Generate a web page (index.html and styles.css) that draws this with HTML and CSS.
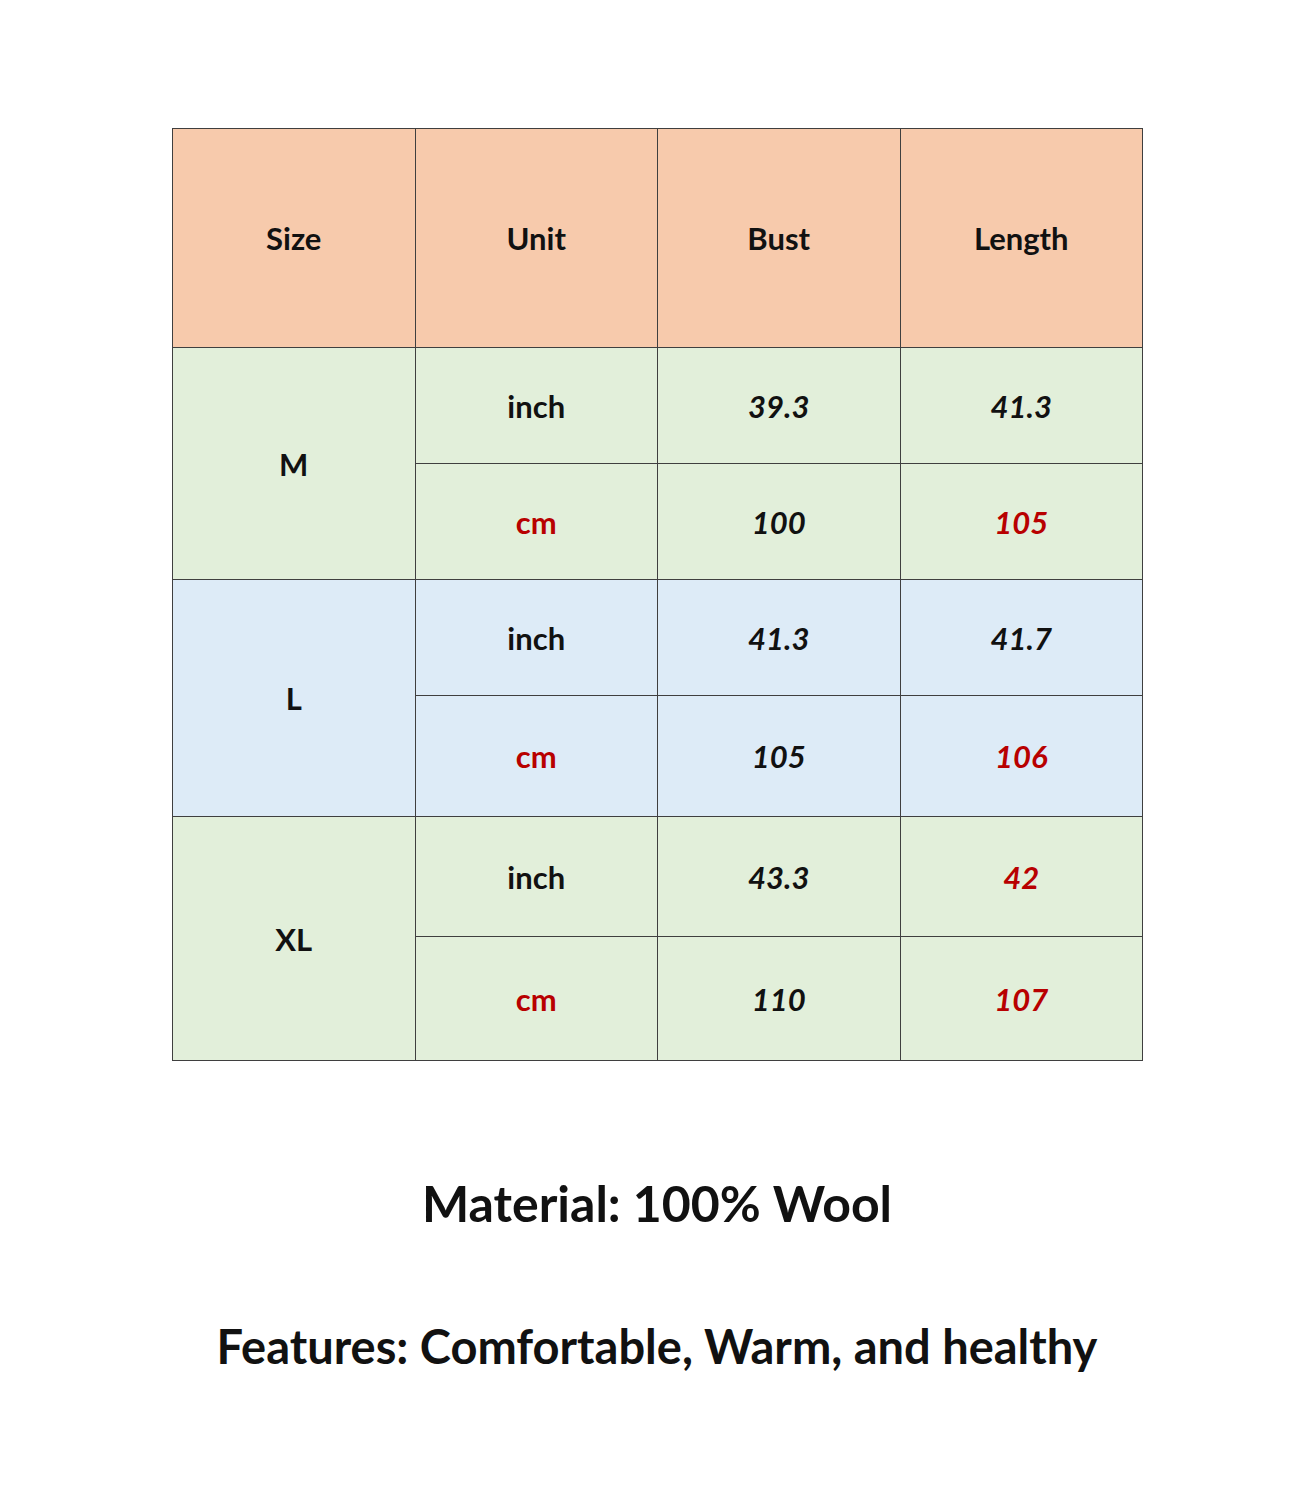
FILE: index.html
```html
<!DOCTYPE html>
<html>
<head>
<meta charset="utf-8">
<link rel="stylesheet" href="styles.css">
</head>
<body>
<div class="page">
  <table class="size-table">
    <colgroup><col class="c1"><col class="c2"><col class="c3"><col class="c4"></colgroup>
    <tr class="head"><th>Size</th><th>Unit</th><th>Bust</th><th>Length</th></tr>
    <tr class="green r1"><td rowspan="2" class="size">M</td><td>inch</td><td class="num">39.3</td><td class="num">41.3</td></tr>
    <tr class="green r2"><td class="red">cm</td><td class="num">100</td><td class="num red">105</td></tr>
    <tr class="blue r3"><td rowspan="2" class="size">L</td><td>inch</td><td class="num">41.3</td><td class="num">41.7</td></tr>
    <tr class="blue r4"><td class="red">cm</td><td class="num">105</td><td class="num red">106</td></tr>
    <tr class="green r5"><td rowspan="2" class="size">XL</td><td>inch</td><td class="num">43.3</td><td class="num red">42</td></tr>
    <tr class="green r6"><td class="red">cm</td><td class="num">110</td><td class="num red">107</td></tr>
  </table>
  <p class="material">Material: 100% Wool</p>
  <p class="features">Features: Comfortable, Warm, and healthy</p>
</div>
</body>
</html>
```
FILE: styles.css
```css
html, body { margin: 0; padding: 0; background: #fff; }
body { font-family: Lato, "Open Sans", sans-serif; color: #111; }
.page { width: 1314px; padding-top: 128px; display: flex; flex-direction: column; align-items: center; }
.size-table { border-collapse: collapse; width: 971px; margin-left: 1px; table-layout: fixed; }
.size-table col { width: 242px; }
.size-table th, .size-table td { border: 1px solid #3f3f3f; text-align: center; vertical-align: middle; padding: 0; font-weight: 700; font-size: 31px; line-height: 36px; }
.head th { background: #f7caac; height: 218px; }
.green td { background: #e2efda; }
.blue td { background: #ddebf7; }
.r1 td, .r2 td, .r3 td { height: 115px; }
.r4 td { height: 120px; }
.r5 td { height: 119px; }
.r6 td { height: 123px; }
.num { font-style: italic; }
.red { color: #b80000; }
.material { margin: 112px 0 0; font-size: 50px; font-weight: 700; line-height: 60px; }
.features { margin: 85px 0 0; font-size: 47px; font-weight: 700; line-height: 56px; }
```
